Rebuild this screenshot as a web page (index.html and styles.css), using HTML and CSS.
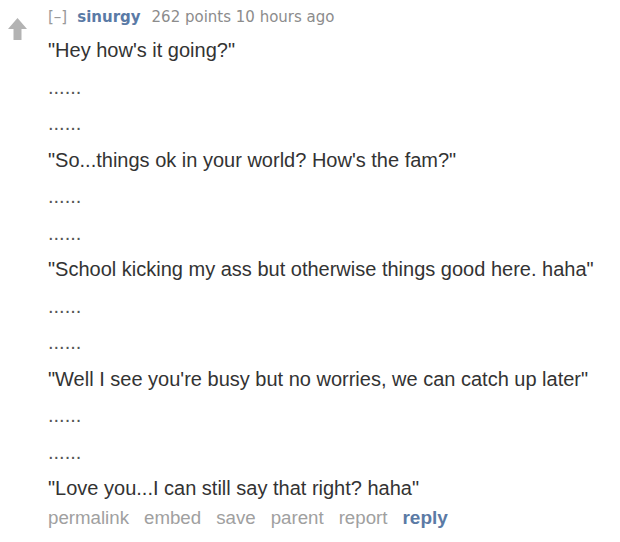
FILE: index.html
```html
<!DOCTYPE html>
<html>
<head>
<meta charset="utf-8">
<link rel="stylesheet" href="styles.css">
</head>
<body>
<div class="comment">
  <div class="votes">
    <svg class="arrow" width="19" height="22" viewBox="0 0 19 22"><path d="M9.5 0 L19 11 L13.5 11 L13.5 22 L5.5 22 L5.5 11 L0 11 Z" fill="#b3b3b3"/></svg>
  </div>
  <div class="entry">
    <div class="tagline"><span class="expand">[–]</span><span class="author">sinurgy</span><span class="score">262 points</span> <span class="time">10 hours ago</span></div>
    <div class="md">
      <p>"Hey how's it going?"</p>
      <p class="dots">......</p>
      <p class="dots">......</p>
      <p>"So...things ok in your world? How's the fam?"</p>
      <p class="dots">......</p>
      <p class="dots">......</p>
      <p>"School kicking my ass but otherwise things good here. haha"</p>
      <p class="dots">......</p>
      <p class="dots">......</p>
      <p>"Well I see you're busy but no worries, we can catch up later"</p>
      <p class="dots">......</p>
      <p class="dots">......</p>
      <p>"Love you...I can still say that right? haha"</p>
    </div>
    <ul class="buttons">
      <li>permalink</li>
      <li>embed</li>
      <li>save</li>
      <li>parent</li>
      <li>report</li>
      <li class="reply">reply</li>
    </ul>
  </div>
</div>
</body>
</html>
```
FILE: styles.css
```css
html, body {
  margin: 0;
  padding: 0;
  background: #fff;
}
.comment {
  display: flex;
  padding-top: 7px;
}
.votes {
  width: 48px;
  flex: none;
  padding-top: 11px;
  padding-left: 8px;
  box-sizing: border-box;
}
.arrow { display: block; }
.entry { flex: 1; }
.tagline {
  font-family: "DejaVu Sans", Verdana, sans-serif;
  font-size: 15px;
  line-height: 20px;
  color: #8c8c8c;
  height: 20px;
  white-space: nowrap;
}
.expand { color: #999; margin-right: 10px; }
.author {
  color: #5a7aa6;
  font-weight: bold;
  margin-right: 11px;
}
.md {
  margin-top: 12px;
  font-family: "Liberation Sans", Arial, sans-serif;
  font-size: 20px;
  color: #333;
}
.md p {
  margin: 0 0 13.5px 0;
  line-height: 23px;
  white-space: nowrap;
}
.md p:last-child { margin-bottom: 0; }
.md p.dots { color: #555; }
.buttons {
  list-style: none;
  margin: 8px 0 0 0;
  padding: 0;
  display: flex;
  gap: 15px;
  font-family: "Liberation Sans", Arial, sans-serif;
  font-size: 18.7px;
  line-height: 20px;
  color: #a0a0a0;
}
.buttons .reply { color: #5b7aa5; font-weight: bold; font-size: 19px; }
```
